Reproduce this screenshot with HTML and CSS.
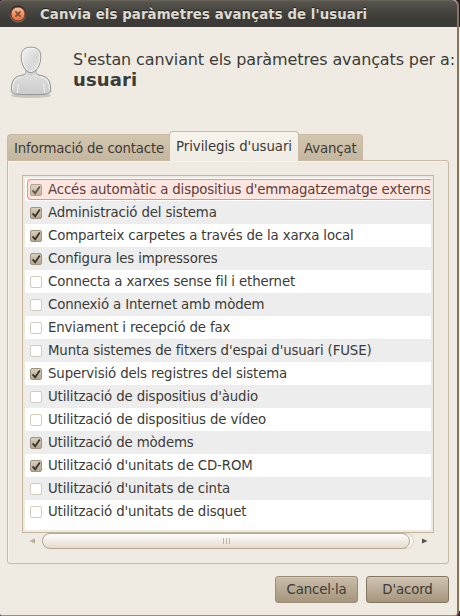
FILE: index.html
```html
<!DOCTYPE html>
<html lang="ca">
<head>
<meta charset="utf-8">
<title>Canvia els paràmetres avançats de l'usuari</title>
<link rel="stylesheet" href="styles.css">
</head>
<body>
<svg class="defs" width="0" height="0">
  <defs>
    <linearGradient id="boxfill" x2="0" y2="1"><stop stop-color="#d9d0c0"/><stop offset="1" stop-color="#b5a58c"/></linearGradient>
    <symbol id="on" viewBox="0 0 13 13"><rect x=".5" y=".5" width="11" height="11" rx="1.500" fill="url(#boxfill)" stroke="#a3947d"/><path d="M2.600 6.300l2.600 3L9.800 2.600" fill="none" stroke="#35332f" stroke-width="1.800"/></symbol>
    <symbol id="off" viewBox="0 0 13 13"><rect x=".5" y=".5" width="11" height="11" rx="1.500" fill="#fff" stroke="#d6ccbc"/></symbol>
  </defs>
</svg>
<div class="window">
  <header class="titlebar">
    <svg class="close" width="18" height="18" viewBox="0 0 18 18">
      <defs><linearGradient id="orange" x2="0" y2="1"><stop stop-color="#fbc3a6"/><stop offset=".5" stop-color="#f4915f"/><stop offset="1" stop-color="#ee6a36"/></linearGradient>
      <linearGradient id="ring" x2="0" y2="1"><stop stop-color="#25231f"/><stop offset="1" stop-color="#77746c"/></linearGradient></defs>
      <circle cx="9" cy="9" r="8.600" fill="url(#ring)"/>
      <circle cx="9" cy="9" r="7" fill="url(#orange)" stroke="#5a2d1b" stroke-width=".8"/>
      <path d="M6.400 6.400l5.200 5.200M11.600 6.400l-5.200 5.200" stroke="#6d4c3d" stroke-width="1.500"/>
    </svg>
    <h1>Canvia els paràmetres avançats de l'usuari</h1>
  </header>
  <section class="intro">
    <svg class="avatar" width="44" height="54" viewBox="0 0 44 54">
      <defs><linearGradient id="face" x2="1" y2="1"><stop stop-color="#f4f4f4"/><stop offset=".6" stop-color="#d8d8d8"/><stop offset="1" stop-color="#e6e6e6"/></linearGradient>
      <linearGradient id="torso" x2="0" y2="1"><stop stop-color="#e4e4e4"/><stop offset="1" stop-color="#cbcbcb"/></linearGradient></defs>
      <ellipse cx="22" cy="49.500" rx="20" ry="2.500" fill="#c9c5bd"/>
      <path d="M17 23v3.500c0 1.500-1.500 2-5 3C6 30.800 2.300 33 2.300 45c0 2.800 4 3.600 19.700 3.600S41.700 47.800 41.700 45C41.700 33 38 30.800 32 29.500c-3.500-1-5-1.500-5-3V23z" fill="url(#torso)" stroke="#929292"/>
      <path d="M3.500 44c.3-9 3-12 9.500-13.300M40.500 44c-.3-9-3-12-9.500-13.300M9.500 38l-1.200 9M34.500 38l1.200 9" fill="none" stroke="#fafafa" stroke-width=".8"/>
      <path d="M17.500 25h9v3L22 30l-4.500-2z" fill="#d2d2d2"/>
      <path d="M22 1.200c-7 0-9.800 3.700-9.800 9.700C12.200 18.500 16.500 26.500 22 26.500S31.800 18.500 31.800 10.900C31.800 4.900 29 1.200 22 1.200z" fill="url(#face)" stroke="#929292"/>
      <path d="M22 2.300c-6.200 0-8.700 3.300-8.700 8.600 0 7 4 14.400 8.700 14.400s8.700-7.400 8.700-14.400c0-5.300-2.500-8.600-8.700-8.600z" fill="none" stroke="#f8f8f8" stroke-width=".8"/>
    </svg>
    <div class="intro-text">
      <p>S'estan canviant els paràmetres avançats per a:</p>
      <strong>usuari</strong>
    </div>
  </section>
  <nav class="tabs">
    <div class="tab first">Informació de contacte</div>
    <div class="tab active">Privilegis d'usuari</div>
    <div class="tab last">Avançat</div>
  </nav>
  <main class="panel">
    <div class="list-frame">
      <ul class="list">
        <li class="selected"><svg class="box"><use href="#on"/></svg><span>Accés automàtic a dispositius d'emmagatzematge externs</span></li>
        <li><svg class="box"><use href="#on"/></svg><span>Administració del sistema</span></li>
        <li><svg class="box"><use href="#on"/></svg><span>Comparteix carpetes a través de la xarxa local</span></li>
        <li><svg class="box"><use href="#on"/></svg><span>Configura les impressores</span></li>
        <li><svg class="box"><use href="#off"/></svg><span>Connecta a xarxes sense fil i ethernet</span></li>
        <li><svg class="box"><use href="#off"/></svg><span>Connexió a Internet amb mòdem</span></li>
        <li><svg class="box"><use href="#off"/></svg><span>Enviament i recepció de fax</span></li>
        <li><svg class="box"><use href="#off"/></svg><span>Munta sistemes de fitxers d'espai d'usuari (FUSE)</span></li>
        <li><svg class="box"><use href="#on"/></svg><span>Supervisió dels registres del sistema</span></li>
        <li><svg class="box"><use href="#off"/></svg><span>Utilització de dispositius d'àudio</span></li>
        <li><svg class="box"><use href="#off"/></svg><span>Utilització de dispositius de vídeo</span></li>
        <li><svg class="box"><use href="#on"/></svg><span>Utilització de mòdems</span></li>
        <li><svg class="box"><use href="#on"/></svg><span>Utilització d'unitats de CD-ROM</span></li>
        <li><svg class="box"><use href="#off"/></svg><span>Utilització d'unitats de cinta</span></li>
        <li><svg class="box"><use href="#off"/></svg><span>Utilització d'unitats de disquet</span></li>
      </ul>
    </div>
    <div class="scrollbar">
      <svg class="arrow" width="20" height="16" viewBox="0 0 20 16"><path d="M13 5.500v5L7.500 8z" fill="#b9ad98"/></svg>
      <div class="trough"><div class="thumb"><i></i><i></i><i></i></div></div>
      <svg class="arrow" width="20" height="16" viewBox="0 0 20 16"><path d="M8 5.500v5L13.500 8z" fill="#55514a"/></svg>
    </div>
  </main>
  <footer class="actions">
    <button>Cancel·la</button>
    <button class="default">D'acord</button>
  </footer>
</div>
</body>
</html>
```
FILE: styles.css
```css
* { box-sizing: border-box; }
body {
  margin: 0;
  width: 460px;
  height: 616px;
  overflow: hidden;
  background: linear-gradient(#2c1527 27px, #f3eee8 27px, #f3eee8 611px, #3a1a33 611px);
  font: 13.33px/23px "DejaVu Sans", sans-serif;
  letter-spacing: -.14px;
  color: #3c3b37;
  white-space: nowrap;
}
.defs { position: absolute; }
.window {
  width: 459px;
  height: 616px;
  background: #efebe3;
  border-right: 2px solid #85765f;
  border-bottom: 1px solid #9d8e79;
  border-radius: 4px 5px 4px 2px;
}
.titlebar {
  height: 27px;
  display: flex;
  align-items: center;
  padding: 1px 0 0 9px;
  background: linear-gradient(#6b6558 0, #55534c 2px, #3c3b37 18px);
  border-radius: 4px 5px 0 0;
}
.titlebar h1 {
  margin: 0 0 0 13px;
  font-size: 13.33px;
  letter-spacing: .08px;
  color: #dfdbd2;
  text-shadow: 0 -1px #24231f;
}
.intro { display: flex; height: 103px; padding-top: 19px; }
.avatar { flex: none; margin-left: 9px; }
.intro-text { margin: 4px 0 0 20px; font-size: 16px; line-height: 20px; letter-spacing: -.12px; }
.intro-text p { margin: 0; }
.intro-text strong { font-size: 18px; letter-spacing: .15px; }
.tabs { display: flex; align-items: flex-end; height: 30px; padding-left: 7px; }
.tab {
  height: 26px;
  padding: 2px 0 0 6px;
  border: 1px solid #c9bba3;
  border-bottom: 0;
  border-radius: 4px 4px 0 0;
  background: linear-gradient(#d3c6ae, #c5b79f);
}
.first { width: 163px; margin-right: -1px; border-top-right-radius: 0; letter-spacing: -.18px; }
.last { width: 65px; margin-left: -1px; border-top-left-radius: 0; padding-left: 5px; }
.active {
  width: 130px;
  height: 30px;
  padding-top: 3px;
  margin-bottom: -1px;
  position: relative;
  letter-spacing: -.06px;
  background: linear-gradient(#f7f4ec, #efebe3);
}
.panel {
  margin-left: 7px;
  width: 442px;
  height: 404px;
  padding: 14px;
  border: 1px solid #c9bba3;
  border-radius: 0 3px 3px 3px;
  box-shadow: inset 1px 1px #f6f3ec;
}
.list-frame {
  width: 412px;
  height: 358px;
  padding: 2px;
  border: 1px solid #c4b69d;
  background: #efebe3;
}
.list {
  margin: 0;
  padding: 0;
  width: 406px;
  height: 352px;
  background: #fff;
  overflow: hidden;
  list-style: none;
}
.list li { display: flex; align-items: center; height: 23px; padding-left: 5px; }
.list li:nth-child(even) { background: #ededed; }
.list .selected {
  height: 21px;
  margin: 1px 0 1px 2px;
  padding-left: 2px;
  border: 1px solid #f4907c;
  border-right: 0;
  border-radius: 4px 0 0 4px;
  background: #fde5e0;
  color: #5d403c;
  letter-spacing: -.15px;
}
.selected .box { opacity: .8; }
.box { flex: none; width: 13px; height: 13px; margin: 1px 5px 0 0; }
.scrollbar { display: flex; height: 16px; }
.arrow { flex: none; }
.trough { width: 372px; border-radius: 8px; background: #f9f6f0; border: 1px solid #ddd2c0; border-left: 0; }
.thumb {
  width: 368px;
  height: 16px;
  margin-top: -1px;
  display: flex;
  gap: 2px;
  align-items: center;
  justify-content: center;
  border: 1px solid #b6a78f;
  border-radius: 8px;
  background: linear-gradient(#fff, #e3dccd);
}
.thumb i { width: 1px; height: 6px; background: #c1b59f; }
.actions { display: flex; gap: 8px; padding: 12px 0 0 275px; }
button {
  width: 83px;
  height: 27px;
  padding: 0 0 1px;
  font: inherit;
  letter-spacing: inherit;
  color: #3c3b37;
  border: 1px solid #9b8c76;
  border-radius: 3px;
  background: linear-gradient(#cbbda9, #a5957e);
  box-shadow: inset 0 1px #d5c9b8;
}
.default { border-color: #85775f; background: linear-gradient(#d0c4b1, #a5957e); }
```
